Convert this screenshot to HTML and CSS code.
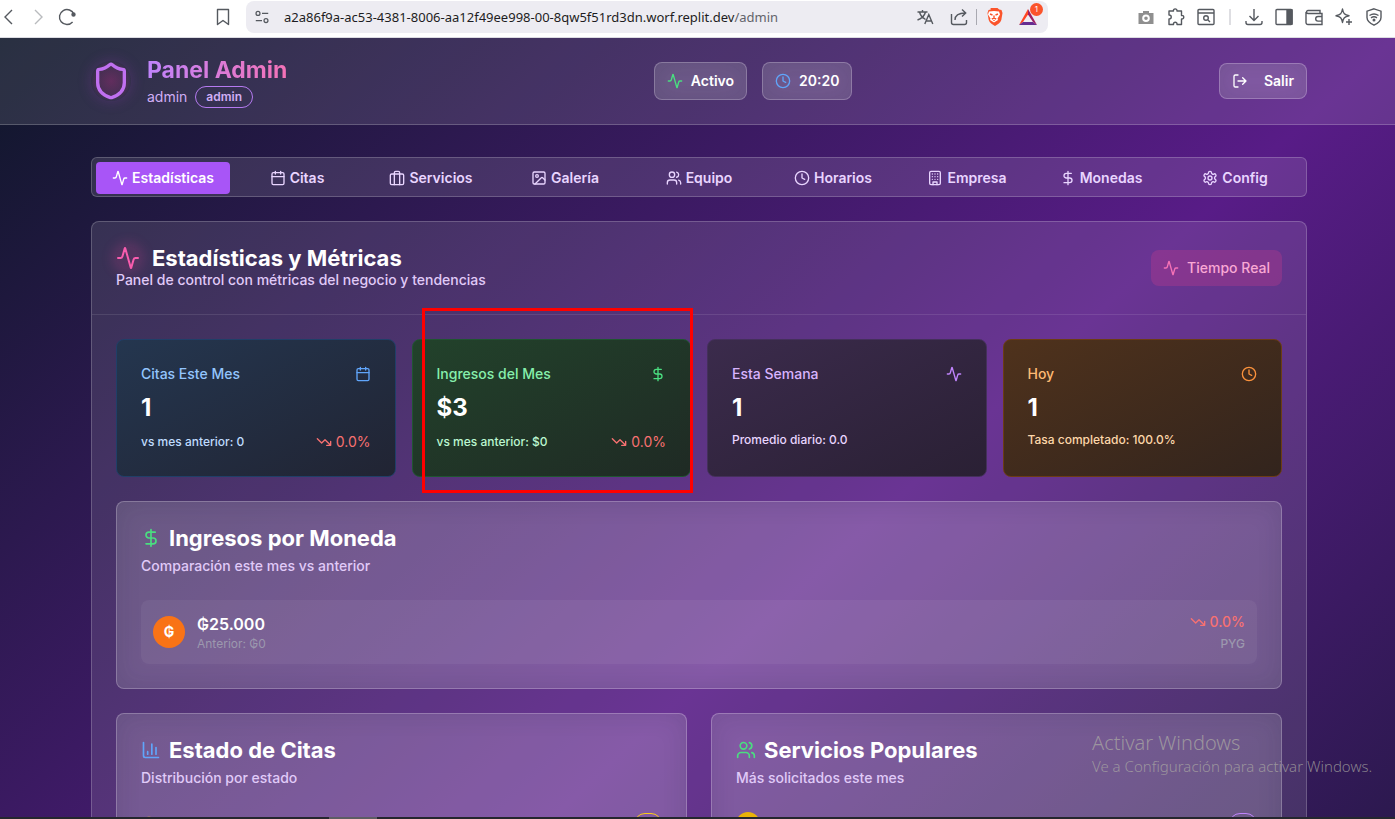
FILE: index.html
```html
<!DOCTYPE html>
<html lang="es">
<head>
<meta charset="utf-8">
<title>Panel Admin</title>
<link rel="stylesheet" href="styles.css">
</head>
<body>
<svg class="sprite" aria-hidden="true">
  <symbol id="activity" viewBox="0 0 24 24"><path d="M22 12h-2.48a2 2 0 0 0-1.93 1.46l-2.35 8.36a.25.25 0 0 1-.48 0L9.24 2.18a.25.25 0 0 0-.48 0l-2.35 8.36A2 2 0 0 1 4.49 12H2"/></symbol>
  <symbol id="shield" viewBox="0 0 24 24"><path d="M20 13c0 5-3.5 7.5-7.66 8.95a1 1 0 0 1-.67-.01C7.5 20.5 4 18 4 13V6a1 1 0 0 1 1-1c2 0 4.5-1.2 6.24-2.72a1.17 1.17 0 0 1 1.52 0C14.51 3.81 17 5 19 5a1 1 0 0 1 1 1z"/></symbol>
  <symbol id="clock" viewBox="0 0 24 24"><circle cx="12" cy="12" r="10"/><path d="M12 6v6l4 2"/></symbol>
  <symbol id="logout" viewBox="0 0 24 24"><path d="M9 21H5a2 2 0 0 1-2-2V5a2 2 0 0 1 2-2h4M16 17l5-5-5-5M21 12H9"/></symbol>
  <symbol id="calendar" viewBox="0 0 24 24"><path d="M8 2v4M16 2v4M3 10h18"/><rect x="3" y="4" width="18" height="18" rx="2"/></symbol>
  <symbol id="briefcase" viewBox="0 0 24 24"><path d="M16 22V4a2 2 0 0 0-2-2h-4a2 2 0 0 0-2 2v18"/><rect x="2" y="6" width="20" height="16" rx="2"/></symbol>
  <symbol id="image" viewBox="0 0 24 24"><rect x="3" y="3" width="18" height="18" rx="2"/><circle cx="9" cy="9" r="2"/><path d="m21 15-3.1-3.1a2 2 0 0 0-2.8 0L6 21"/></symbol>
  <symbol id="team" viewBox="0 0 24 24"><path d="M16 21v-2a4 4 0 0 0-4-4H6a4 4 0 0 0-4 4v2"/><circle cx="9" cy="7" r="4"/><path d="M22 21v-2a4 4 0 0 0-3-3.87M16 3.13a4 4 0 0 1 0 7.75"/></symbol>
  <symbol id="building" viewBox="0 0 24 24"><rect x="4" y="2" width="16" height="20" rx="2"/><path d="M9 22v-4h6v4M8 6h.01M16 6h.01M12 6h.01M12 10h.01M12 14h.01M16 10h.01M16 14h.01M8 10h.01M8 14h.01"/></symbol>
  <symbol id="dollar" viewBox="0 0 24 24"><path d="M12 2v20M17 5H9.5a3.5 3.5 0 0 0 0 7h5a3.5 3.5 0 0 1 0 7H6"/></symbol>
  <symbol id="gear" viewBox="0 0 24 24"><path d="M12.22 2h-.44a2 2 0 0 0-2 2v.18a2 2 0 0 1-1 1.73l-.43.25a2 2 0 0 1-2 0l-.15-.08a2 2 0 0 0-2.73.73l-.22.38a2 2 0 0 0 .73 2.73l.15.1a2 2 0 0 1 1 1.72v.51a2 2 0 0 1-1 1.74l-.15.09a2 2 0 0 0-.73 2.73l.22.38a2 2 0 0 0 2.73.73l.15-.08a2 2 0 0 1 2 0l.43.25a2 2 0 0 1 1 1.73V20a2 2 0 0 0 2 2h.44a2 2 0 0 0 2-2v-.18a2 2 0 0 1 1-1.73l.43-.25a2 2 0 0 1 2 0l.15.08a2 2 0 0 0 2.73-.73l.22-.39a2 2 0 0 0-.73-2.73l-.15-.08a2 2 0 0 1-1-1.74v-.5a2 2 0 0 1 1-1.74l.15-.09a2 2 0 0 0 .73-2.73l-.22-.38a2 2 0 0 0-2.73-.73l-.15.08a2 2 0 0 1-2 0l-.43-.25a2 2 0 0 1-1-1.73V4a2 2 0 0 0-2-2z"/><circle cx="12" cy="12" r="3"/></symbol>
  <symbol id="down" viewBox="0 0 24 24"><path d="m22 17-8.5-8.5-5 5L2 7M16 17h6v-6"/></symbol>
  <symbol id="chart" viewBox="0 0 24 24"><path d="M3 3v16a2 2 0 0 0 2 2h16M18 17V9M13 17V5M8 17v-3"/></symbol>
</svg>

<div class="browser">
  <nav class="toolbar" aria-label="Navegador">
    <div class="nav-buttons">
      <button class="tool" aria-label="Atrás"><svg viewBox="0 0 18 18"><path d="M12 2 5 9l7 7"/></svg></button>
      <button class="tool faded" aria-label="Adelante"><svg viewBox="0 0 18 18"><path d="m6 2 7 7-7 7"/></svg></button>
      <button class="tool" aria-label="Recargar"><svg viewBox="0 0 18 18"><path d="M14.600 14A7.500 7.500 0 1 1 16 6.400"/><circle cx="15.500" cy="6.500" r="1.500" fill="currentColor"/></svg></button>
    </div>
    <button class="tool bookmark" aria-label="Marcador"><svg viewBox="0 0 18 18"><path d="M3.500 1.500h11v15L9 12.500l-5.500 4z" stroke-linejoin="round"/></svg></button>
    <div class="address">
      <button class="tool small" aria-label="Información del sitio"><svg viewBox="0 0 18 18"><circle cx="4.500" cy="5" r="2.200"/><path d="M9 5h7M2 13h7"/><circle cx="13.500" cy="13" r="2.200"/></svg></button>
      <span class="url">a2a86f9a-ac53-4381-8006-aa12f49ee998-00-8qw5f51rd3dn.worf.replit.dev<span class="path">/admin</span></span>
      <div class="address-tools">
        <button class="tool" aria-label="Traducir"><svg viewBox="0 0 18 18"><path d="M1.500 4h10M6.500 2v2M3.500 4c1 4 3.500 6 6 7.500M9.500 4c-1 4-4 6.500-8 8M8.800 16 12.800 6.500 16.800 16M10.200 13h5.200"/></svg></button>
        <button class="tool" aria-label="Compartir"><svg viewBox="0 0 18 18"><path d="M1.500 6v8.500a2 2 0 0 0 2 2h11a2 2 0 0 0 2-2V12M5 12c0-4.500 3-7 10.500-7M12 1.500 15.700 5 12 8.500"/></svg></button>
        <span class="split"></span>
        <button class="tool" aria-label="Brave Shields"><svg viewBox="0 0 18 18"><path d="M5.500 0h7l1.700 1.500 2.300.5 1 3-1.200 7c-1 3-3.500 4.500-6.300 6-2.800-1.500-5.300-3-6.300-6l-1.200-7 1-3 2.300-.5z" fill="#fb542b" stroke="none"/><path d="M4 3.500 9 3l5 .5 1 3-2.500 4 .5 1.500L9 14.500 5 12l.5-1.500L3 6.500z" fill="#fff" stroke="none"/><path d="m5 6 2.500 1M13 6l-2.500 1M9 7.500V10M6.800 11 9 10l2.200 1M9 12v1" stroke="#fb542b"/></svg></button>
        <button class="tool" aria-label="Recompensas"><svg viewBox="0 0 18 18"><path d="M9 1 0 17l4-3 5-7.500z" fill="#ff4724" stroke="none"/><path d="m0 17 4-3h10l4 3z" fill="#662d91" stroke="none"/><path d="m9 1 9 16-4-3-5-7.500z" fill="#9e1f63" stroke="none"/></svg><span class="count">1</span></button>
      </div>
    </div>
    <div class="extensions">
      <button class="tool gray" aria-label="Cámara"><svg viewBox="0 0 18 18"><path fill="currentColor" stroke="none" fill-rule="evenodd" d="M6 3h6v2h4.500v11h-15V5H6zM9 6.500a3.800 3.800 0 1 0 0 7.600 3.800 3.800 0 0 0 0-7.600zm0 2a1.800 1.800 0 1 1 0 3.600 1.800 1.800 0 0 1 0-3.600z"/></svg></button>
      <button class="tool" aria-label="Extensiones"><svg viewBox="0 0 18 18"><path d="M2 3h4.500c-.8-2.800 4-2.800 3.500 0h4.500v4.500c3-.7 3 4 0 3.500v5.500H10c.5-3-4-3-3.500 0H2V11c3 0 3-4 0-4z" stroke-linejoin="round"/></svg></button>
      <button class="tool" aria-label="Buscar en la página"><svg viewBox="0 0 18 18"><rect x="1" y="1.500" width="16" height="15" rx="1"/><path d="M1 5h16M11 12l2 2"/><circle cx="9" cy="10" r="2.300"/></svg></button>
      <span class="split light"></span>
      <button class="tool" aria-label="Descargas"><svg viewBox="0 0 18 18"><path d="M9 1v11M4.500 8 9 12.500 13.500 8M1 13v1.500a2 2 0 0 0 2 2h12a2 2 0 0 0 2-2V13"/></svg></button>
      <button class="tool" aria-label="Panel lateral"><svg viewBox="0 0 18 18"><rect x="1" y="1.500" width="16" height="15" rx="1"/><path d="M12 2h5v14h-5z" fill="currentColor"/></svg></button>
      <button class="tool" aria-label="Cartera"><svg viewBox="0 0 18 18"><path d="M15 5V2.500H3a1.500 1.500 0 0 0 0 3h14v11H3a2 2 0 0 1-2-2V4M17 8.500h-4a2.300 2.300 0 0 0 0 4.600h4"/></svg></button>
      <button class="tool" aria-label="Asistente"><svg viewBox="0 0 18 18"><path d="M7.500 1c.8 4.500 2 5.700 6.500 6.800-4.500 1-5.700 2.200-6.500 6.700-.8-4.500-2-5.700-6.500-6.700C5.500 6.700 6.700 5.500 7.500 1zM14 11v6M11 14h6" stroke-linejoin="round"/></svg></button>
      <button class="tool" aria-label="VPN"><svg viewBox="0 0 18 18"><path d="m9 .8 7 2.400v6.300c0 3.500-3.500 6-7 7.700-3.500-1.700-7-4.200-7-7.700V3.200z"/><path d="M4.500 7.500q4.500-3 9 0M6 9.800q3-2 6 0"/><circle cx="9" cy="12" r=".8"/></svg></button>
    </div>
  </nav>

  <div class="page">
    <header class="header">
      <div class="wrap header-row">
        <div class="brand">
          <svg class="icon brand-icon"><use href="#shield"/></svg>
          <div>
            <h1>Panel Admin</h1>
            <div class="user"><span>admin</span><span class="role">admin</span></div>
          </div>
        </div>
        <div class="status">
          <div class="pill glass"><svg class="icon green"><use href="#activity"/></svg>Activo</div>
          <div class="pill glass"><svg class="icon blue"><use href="#clock"/></svg>20:20</div>
        </div>
        <button class="exit glass"><svg class="icon"><use href="#logout"/></svg>Salir</button>
      </div>
    </header>

    <main class="wrap main">
      <div class="tabs" role="tablist">
        <button class="tab active" role="tab" aria-selected="true"><svg class="icon"><use href="#activity"/></svg>Estadísticas</button>
        <button class="tab" role="tab"><svg class="icon"><use href="#calendar"/></svg>Citas</button>
        <button class="tab" role="tab"><svg class="icon"><use href="#briefcase"/></svg>Servicios</button>
        <button class="tab" role="tab"><svg class="icon"><use href="#image"/></svg>Galería</button>
        <button class="tab" role="tab"><svg class="icon"><use href="#team"/></svg>Equipo</button>
        <button class="tab" role="tab"><svg class="icon"><use href="#clock"/></svg>Horarios</button>
        <button class="tab" role="tab"><svg class="icon"><use href="#building"/></svg>Empresa</button>
        <button class="tab" role="tab"><svg class="icon"><use href="#dollar"/></svg>Monedas</button>
        <button class="tab" role="tab"><svg class="icon"><use href="#gear"/></svg>Config</button>
      </div>

      <section class="panel">
        <div class="panel-head">
          <div>
            <h2 class="title wide"><svg class="icon glow"><use href="#activity"/></svg>Estadísticas y Métricas</h2>
            <p class="desc">Panel de control con métricas del negocio y tendencias</p>
          </div>
          <button class="live"><svg class="icon"><use href="#activity"/></svg>Tiempo Real</button>
        </div>
        <div class="panel-body">
          <div class="stats">
            <article class="stat stat-blue">
              <div class="stat-head"><h3>Citas Este Mes</h3><svg class="icon"><use href="#calendar"/></svg></div>
              <div class="value">1</div>
              <div class="stat-foot"><span class="note">vs mes anterior: 0</span><span class="trend"><svg class="icon"><use href="#down"/></svg>0.0%</span></div>
            </article>
            <article class="stat stat-green">
              <div class="stat-head"><h3>Ingresos del Mes</h3><svg class="icon"><use href="#dollar"/></svg></div>
              <div class="value">$3</div>
              <div class="stat-foot"><span class="note">vs mes anterior: $0</span><span class="trend"><svg class="icon"><use href="#down"/></svg>0.0%</span></div>
              <div class="marker"></div>
            </article>
            <article class="stat stat-purple">
              <div class="stat-head"><h3>Esta Semana</h3><svg class="icon"><use href="#activity"/></svg></div>
              <div class="value">1</div>
              <p class="note">Promedio diario: 0.0</p>
            </article>
            <article class="stat stat-orange">
              <div class="stat-head"><h3>Hoy</h3><svg class="icon"><use href="#clock"/></svg></div>
              <div class="value">1</div>
              <p class="note">Tasa completado: 100.0%</p>
            </article>
          </div>

          <section class="card glass">
            <h2 class="title"><svg class="icon green"><use href="#dollar"/></svg>Ingresos por Moneda</h2>
            <p class="desc">Comparación este mes vs anterior</p>
            <div class="currency">
              <span class="coin">₲</span>
              <div class="amounts"><div class="amount">₲25.000</div><div class="muted">Anterior: ₲0</div></div>
              <div class="change"><span class="trend"><svg class="icon"><use href="#down"/></svg>0.0%</span><span class="muted">PYG</span></div>
            </div>
          </section>

          <div class="pair">
            <section class="card glass">
              <h2 class="title"><svg class="icon blue"><use href="#chart"/></svg>Estado de Citas</h2>
              <p class="desc">Distribución por estado</p>
              <div class="line"><svg class="icon yellow"><use href="#clock"/></svg><span class="chip chip-yellow"></span></div>
            </section>
            <section class="card glass">
              <h2 class="title"><svg class="icon green"><use href="#team"/></svg>Servicios Populares</h2>
              <p class="desc">Más solicitados este mes</p>
              <div class="line"><span class="rank"></span><span class="chip chip-purple"></span></div>
            </section>
          </div>
        </div>
      </section>
    </main>
  </div>
  <div class="taskbar"><span class="task"></span></div>
  <aside class="watermark"><div class="watermark-title">Activar Windows</div><div>Ve a Configuración para activar Windows.</div></aside>
</div>
</body>
</html>
```

FILE: styles.css
```css
* { box-sizing: border-box; }
body, h1, h2, h3, p { margin: 0; }
body { font: 14px/20px Inter, "Liberation Sans", sans-serif; color: #fff; }
button { font: inherit; color: inherit; border: 0; background: none; padding: 0; }

.sprite { display: none; }
.icon { width: 16px; height: 16px; flex: none; fill: none; stroke: currentColor; stroke-width: 2; stroke-linecap: round; stroke-linejoin: round; }
.green { color: #4ade80; }
.blue { color: #60a5fa; }
.yellow { color: #facc15; }

.browser { position: relative; display: flex; flex-direction: column; height: 100vh; overflow: hidden; }

/* Browser toolbar */
.toolbar { display: flex; align-items: center; height: 38px; flex: none; padding: 1px 12px 4px 0; background: #fff; border-bottom: 1px solid #dcdce2; color: #55595f; }
.tool { display: flex; position: relative; width: 18px; height: 18px; flex: none; }
.tool svg { width: 18px; height: 18px; fill: none; stroke: currentColor; stroke-width: 1.4; }
.small, .tool.small svg { width: 16px; height: 16px; }
.faded { color: #b9bbbe; }
.gray { color: #8f8f8f; }
.nav-buttons { display: flex; gap: 11px; width: 214px; }
.bookmark { margin-right: 14px; }
.address { display: flex; align-items: center; width: 802px; height: 32px; padding: 0 11px 0 8px; border-radius: 8px; background: #edecf2; }
.url { margin-left: 14px; font: 13px/20px "Noto Sans", sans-serif; color: #1d1d22; white-space: nowrap; }
.path { color: #62636a; }
.address-tools { display: flex; align-items: center; gap: 16px; margin-left: auto; }
.split { width: 1px; height: 16px; margin: 0 -8px; background: #a9a9b1; }
.light { width: 2px; margin: 0 2px; background: #dedee2; }
.count { position: absolute; top: -5px; right: -6px; width: 13px; height: 13px; border-radius: 50%; background: #fb542b; color: #fff; font-size: 8px; line-height: 13px; text-align: center; }
.extensions { display: flex; align-items: center; gap: 12px; margin-left: auto; }

/* Page */
.page { flex: 1; min-height: 0; overflow: hidden; background: linear-gradient(to bottom right, #0f172a, #581c87, #0f172a) 0 0 / 100% 1290px; }
.wrap { width: 100%; max-width: 1283px; margin: 0 auto; padding: 0 32px 0 35px; }
.header { padding: 16px 0; border-bottom: 1px solid rgba(255, 255, 255, .2); background: rgba(255, 255, 255, .11); }
.header-row { display: flex; align-items: center; justify-content: space-between; }
.brand { display: flex; align-items: center; gap: 16px; }
.brand-icon { width: 40px; height: 40px; color: #c070f0; border-radius: 50%; background: radial-gradient(circle, rgba(190, 40, 130, .35), rgba(190, 40, 130, .12) 60%, transparent 72%); box-shadow: 0 0 14px rgba(168, 60, 200, .25); }
h1 { width: max-content; font-size: 23px; line-height: 32px; font-weight: 700; color: transparent; background: linear-gradient(to right, #c084fc, #f472b6); background-clip: text; -webkit-background-clip: text; }
.user { display: flex; align-items: center; gap: 8px; color: #d0aef5; }
.role { padding: 2px 10px; border: 1px solid #b57af0; border-radius: 11px; font-size: 12px; line-height: 16px; font-weight: 600; }
.glass { border: 1px solid rgba(255, 255, 255, .2); border-radius: 8px; background: rgba(255, 255, 255, .19); box-shadow: inset 0 0 24px rgba(30, 30, 60, .14); }
.status { display: flex; gap: 15px; }
.pill { display: flex; align-items: center; gap: 8px; padding: 8px 12px; font-weight: 600; }
.exit { display: flex; align-items: center; gap: 16px; height: 36px; padding: 0 12px; font-weight: 600; }

.main { padding-top: 32px; padding-bottom: 32px; }
.tabs { display: grid; grid-template-columns: repeat(9, 1fr); height: 40px; padding: 4px; border: 1px solid rgba(255, 255, 255, .2); border-radius: 6px; background: rgba(255, 255, 255, .11); }
.tab { display: flex; align-items: center; justify-content: center; gap: 4px; height: 32px; border-radius: 4px; color: #e9d5ff; font-weight: 600; }
.active { background: #a855f7; color: #fff; }

.panel { margin-top: 24px; border: 1px solid rgba(255, 255, 255, .2); border-radius: 8px; background: rgba(255, 255, 255, .11); }
.panel-head { display: flex; align-items: center; justify-content: space-between; padding: 24px; border-bottom: 1px solid rgba(255, 255, 255, .1); }
.title { display: flex; align-items: center; gap: 8px; font-size: 22px; line-height: 24px; font-weight: 700; white-space: nowrap; }
.title .icon { width: 20px; height: 20px; }
.wide { gap: 12px; }
.title .glow { width: 24px; height: 24px; color: #f95cae; border-radius: 50%; background: rgba(236, 72, 153, .13); box-shadow: 0 0 12px 4px rgba(236, 72, 153, .18); }
.desc { color: #e0caf8; font-weight: 500; }
.live { display: flex; align-items: center; gap: 8px; height: 36px; padding: 0 12px; border-radius: 8px; background: rgba(190, 60, 140, .35); color: #f9a8d4; font-weight: 500; }
.live .icon { color: #f472b6; }
.panel-body { display: grid; gap: 24px; padding: 24px; }

.stats { display: grid; grid-template-columns: repeat(4, 1fr); gap: 16px; }
.stat { position: relative; padding: 24px; border: 1px solid; border-radius: 8px; }
.stat-head, .stat-foot { display: flex; align-items: center; justify-content: space-between; }
.stat h3 { font-size: 14px; font-weight: 500; }
.value { margin: 8px 0; font-size: 24px; line-height: 32px; font-weight: 700; color: #fff; }
.note { font-size: 12px; line-height: 16px; font-weight: 500; }
.stat-blue { color: #93c5fd; border-color: #203f68; background: linear-gradient(to bottom right, #24364f, #212433); }
.stat-blue .icon { color: #60a5fa; }
.stat-blue .note { color: #bfdbfe; }
.stat-green { color: #86efac; border-color: #1f5530; background: linear-gradient(to bottom right, #22422b, #1f2a24); }
.stat-green .icon { color: #4ade80; }
.stat-green .note { color: #bbf7d0; }
.stat-purple { color: #d8b4fe; border-color: #44305b; background: linear-gradient(to bottom right, #3b2b4c, #2a2034); }
.stat-purple .icon { color: #c084fc; }
.stat-purple .note { color: #e9d5ff; }
.stat-orange { color: #fdba74; border-color: #6c3c14; background: linear-gradient(to bottom right, #4f321c, #32241d); }
.stat-orange .icon { color: #fb923c; }
.stat-orange .note { color: #fed7aa; }
.trend, .stat .trend .icon { color: #f87171; }
.trend { display: flex; align-items: center; gap: 4px; }
.marker { position: absolute; top: -32px; right: -3px; bottom: -17px; left: 9px; border: 3px solid #f00; }

.card { min-width: 0; padding: 24px; }
.card .desc { margin-top: 6px; }
.currency { display: flex; align-items: center; gap: 12px; margin-top: 24px; padding: 12px; border-radius: 8px; background: rgba(255, 255, 255, .05); }
.coin { display: grid; place-items: center; width: 32px; height: 32px; border-radius: 50%; background: #f97316; font-size: 14px; font-weight: 700; }
.amount { font-size: 16px; line-height: 24px; font-weight: 600; }
.muted { font-size: 12px; line-height: 16px; color: #9c98ae; }
.change { display: flex; flex-direction: column; align-items: flex-end; gap: 4px; margin-left: auto; }
.change, .change .muted { font-weight: 500; }
.pair { display: grid; grid-template-columns: 1fr 1fr; gap: 24px; }
.line { display: flex; align-items: center; justify-content: space-between; height: 24px; margin-top: 24px; }
.rank { width: 24px; height: 24px; border-radius: 50%; background: #eab308; }
.chip { width: 28px; height: 22px; border: 1px solid; border-radius: 11px; }
.chip-yellow { color: #facc15; }
.chip-purple { color: #c084fc; }

.taskbar { flex: none; height: 2px; padding-left: 329px; background: #25272e; }
.task { display: block; width: 48px; height: 2px; background: #5d5d63; }
.watermark { position: absolute; right: 28px; bottom: 43px; width: 275px; font: 15px/20px "Noto Sans", sans-serif; font-weight: 300; color: rgba(175, 175, 165, .7); white-space: nowrap; }
.watermark-title { font-size: 20px; line-height: 26px; }
```
